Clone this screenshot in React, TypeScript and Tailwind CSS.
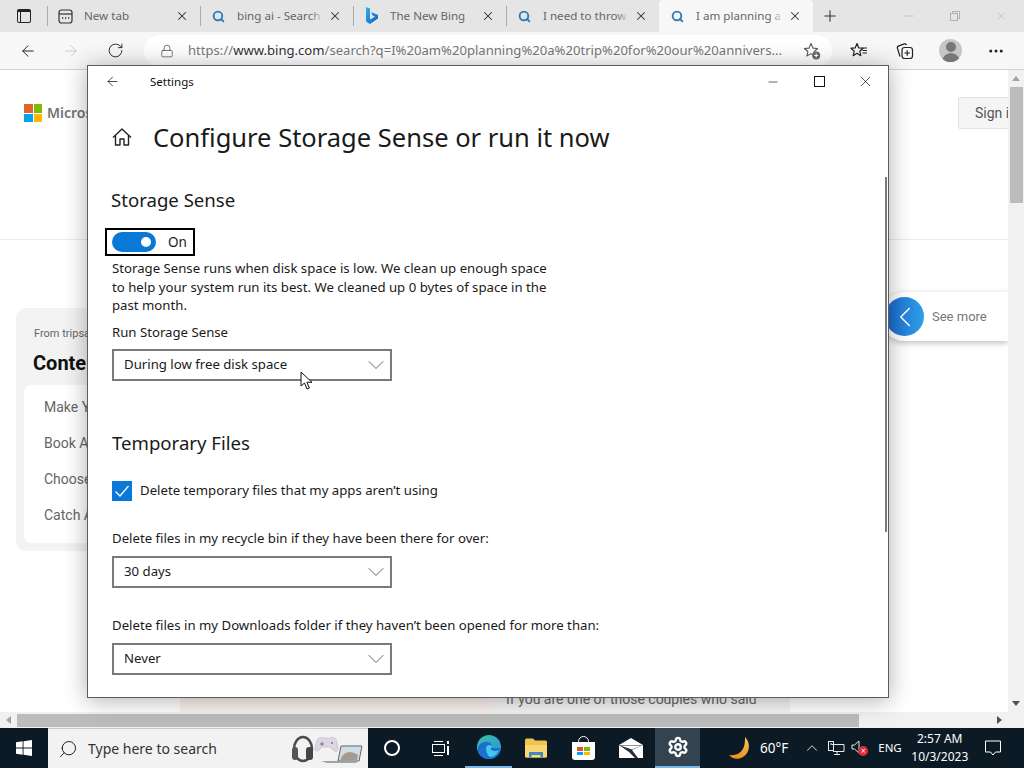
import { ArrowLeft, ArrowRight, ChevronDown, ChevronLeft, ChevronUp, Lock, Minus, MoreHorizontal, Plus, RotateCw, Search, Settings, X } from 'lucide-react'

const ui = { fontFamily: '"Noto Sans", sans-serif' }

function TabSearchIcon() {
  return <Search size={13} strokeWidth={3.4} className="text-[#2a7cb8] shrink-0" />
}

function BingLogo() {
  return (
    <svg width="14" height="18" viewBox="0 0 14 18" className="shrink-0">
      <defs>
        <linearGradient id="bing" x1="0" y1="0" x2="1" y2="1">
          <stop offset="0" stopColor="#2fb4ea" />
          <stop offset="1" stopColor="#1557c9" />
        </linearGradient>
      </defs>
      <path d="M1 0l4 1.500v11l5-2.800-2.400-1.200-1.400-3.400L13 8v3.600L5 17l-4-2.400z" fill="url(#bing)" />
    </svg>
  )
}

function NewTabIcon() {
  return (
    <svg width="15" height="15" viewBox="0 0 15 15" fill="none" stroke="#333" strokeWidth="1.2" className="shrink-0">
      <rect x="1" y="1" width="13" height="13" rx="2.500" />
      <path d="M1 5h13" />
      <path d="M4 9h1.200M7 9h1.200M10 9h1.200" strokeWidth="1.600" />
    </svg>
  )
}

function BrowserTab({ title, icon, active }: { title: string; icon: React.ReactNode; active?: boolean }) {
  return (
    <div className={`h-full flex items-center pr-[11px] relative ${active ? 'w-[154px] pl-[11px] bg-[#f7f7f7] rounded-t' : 'w-[152px] pl-[10px]'}`}>
      <div className="w-[15px] flex justify-center shrink-0">{icon}</div>
      <div className="ml-[11px] flex-1 relative text-[11.6px] text-[#666] whitespace-nowrap overflow-hidden">
        {title}
        <div className={`absolute right-0 top-0 bottom-0 w-[14px] bg-gradient-to-r from-transparent ${active ? 'to-[#f7f7f7]' : 'to-[#e5e5e5]'}`} />
      </div>
      <X size={14} strokeWidth={1.8} className="text-[#333] shrink-0 ml-1" />
    </div>
  )
}

function Separator() {
  return <div className="w-px h-[20px] bg-[#a9a9a9] shrink-0" />
}

function RestoreIcon() {
  return (
    <svg width="10" height="10" viewBox="0 0 10 10" fill="none" stroke="#b0b0b0" strokeWidth="1">
      <rect x="0.500" y="2.500" width="7" height="7" />
      <path d="M2.500 2.500v-2h7v7h-2" />
    </svg>
  )
}

function TabStrip() {
  return (
    <div className="h-[32px] bg-[#e5e5e5] flex items-center shrink-0">
      <div className="w-[47px] flex justify-center pl-[1px]">
        <div className="w-[14px] h-[14px] border-[1.5px] border-[#222] rounded-[2px] border-t-[3px] flex">
          <div className="w-[3px] border-r border-[#222]" />
        </div>
      </div>
      <Separator />
      <BrowserTab title="New tab" icon={<NewTabIcon />} />
      <Separator />
      <BrowserTab title="bing ai - Search" icon={<TabSearchIcon />} />
      <Separator />
      <BrowserTab title="The New Bing" icon={<BingLogo />} />
      <Separator />
      <BrowserTab title="I need to throw" icon={<TabSearchIcon />} />
      <BrowserTab title="I am planning a" icon={<TabSearchIcon />} active />
      <Plus size={18} strokeWidth={1.4} className="text-[#333] ml-[8px]" />
      <div className="flex-1" />
      <div className="flex items-center gap-[34px] pr-[16px] text-[#b0b0b0]">
        <Minus size={14} strokeWidth={1} />
        <RestoreIcon />
        <X size={14} strokeWidth={1} />
      </div>
    </div>
  )
}

function CollectionsIcon() {
  return (
    <svg width="18" height="18" viewBox="0 0 18 18" fill="none" stroke="#222" strokeWidth="1.2">
      <path d="M4 14.500L1.500 6.500c-.4-1.300.2-2.200 1.300-2.600l5.500-2c1-.3 1.800.1 2.200 1" />
      <rect x="6" y="5.500" width="10.500" height="11" rx="2.500" />
      <path d="M11.200 8.200v5.600M8.400 11h5.600" />
    </svg>
  )
}

function FavoritesIcon() {
  return (
    <svg width="18" height="18" viewBox="0 0 18 18" fill="none" stroke="#222" strokeWidth="1.2">
      <path d="M7 1.500l1.800 4.400 4.200.3-3.200 3 1 4.500L7 11.300 3.200 13.700l1-4.500L1 6.200l4.200-.3z" strokeLinejoin="round" />
      <path d="M12.500 6h4.500M12.500 8.500h4.500M12.500 11h4.500" />
    </svg>
  )
}

function AddFavoriteIcon() {
  return (
    <svg width="18" height="18" viewBox="0 0 18 18" fill="none" stroke="#555" strokeWidth="1.1">
      <path d="M8 1.500l2 4.600 4.600.4-3.500 3.100 1 4.500L8 11.600 3.900 14l1-4.500L1.400 6.500l4.600-.4z" strokeLinejoin="round" />
      <circle cx="13.200" cy="13.500" r="4" fill="#666" stroke="none" />
      <path d="M13.200 11.500v4M11.200 13.500h4" stroke="#fff" />
    </svg>
  )
}

function Toolbar() {
  return (
    <div className="h-[38px] bg-[#f7f7f7] border-b border-[#d2d2d2] flex items-center shrink-0">
      <ArrowLeft size={18} strokeWidth={1.3} className="text-[#222] ml-[19px]" />
      <ArrowRight size={18} strokeWidth={1.3} className="text-[#c9c9c9] ml-[25px]" />
      <RotateCw size={17} strokeWidth={1.3} className="text-[#222] ml-[27px]" />
      <div className="ml-[20px] w-[688px] h-[32px] bg-white rounded-full flex items-center pl-[16px] pr-[11px] text-[13.1px] whitespace-nowrap overflow-hidden">
        <Lock size={14} strokeWidth={1.2} className="text-[#444] shrink-0" />
        <div className="ml-[14px] flex-1 overflow-hidden">
          <span className="text-[#777]">https://</span>
          <span className="text-[#333]">www.bing.com</span>
          <span className="text-[#777]">/search?q=I%20am%20planning%20a%20trip%20for%20our%20annivers...</span>
        </div>
        <div className="w-[18px] shrink-0"><AddFavoriteIcon /></div>
      </div>
      <div className="ml-[18px] shrink-0"><FavoritesIcon /></div>
      <div className="ml-[28px] shrink-0"><CollectionsIcon /></div>
      <div className="ml-[25px] w-[23px] h-[23px] rounded-full bg-[#c6c6c6] flex flex-col items-center overflow-hidden shrink-0">
        <div className="w-[10px] h-[10px] mt-[3px] rounded-full bg-[#777]" />
        <div className="w-[18px] h-[10px] mt-[1px] rounded-t-full bg-[#777]" />
      </div>
      <MoreHorizontal size={18} className="text-[#222] ml-[25px]" />
    </div>
  )
}

function MsLogo() {
  return (
    <div className="grid grid-cols-2 gap-px w-[18px] h-[18px] shrink-0">
      <div className="bg-[#e0662c]" />
      <div className="bg-[#7fba00]" />
      <div className="bg-[#00a4ef]" />
      <div className="bg-[#ffb900]" />
    </div>
  )
}

function BackgroundPage() {
  const rows = ['Make Your', 'Book A', 'Choose', 'Catch A']
  return (
    <div className="flex-1 bg-white relative overflow-hidden" style={{ fontFamily: 'Roboto, sans-serif' }}>
      <div className="absolute left-[24px] top-[34px] flex items-center gap-[5px]">
        <MsLogo />
        <span className="text-[14px] leading-[16px] font-semibold text-[#737373]" style={ui}>Microsoft</span>
      </div>
      <div className="absolute left-[958px] top-[27px] w-[60px] h-[32px] bg-[#f5f5f5] border border-[#e3e3e3] rounded-[2px] pl-[16px] flex items-center text-[14px] text-[#555]">Sign in</div>
      <div className="absolute left-0 right-[16px] top-[169px] h-px bg-[#ececec]" />
      <div className="absolute left-[16px] top-[238px] w-[120px] h-[243px] bg-[#f3f3f3] rounded-[10px] pl-[8px] pt-[18px]">
        <div className="pl-[10px] text-[11px] text-[#666] whitespace-nowrap">From tripsavvy</div>
        <div className="pl-[9px] mt-[8px] text-[20px] font-bold text-[#111] leading-[24px]">Contents</div>
        <div className="mt-[10px] w-[110px] h-[158px] bg-white rounded-[8px] pl-[20px] pt-[13px] flex flex-col gap-[17px]">
          {rows.map((r) => (
            <div key={r} className="text-[14px] leading-[19px] text-[#666] whitespace-nowrap">{r}</div>
          ))}
        </div>
      </div>
      <div className="absolute left-[880px] top-[222px] w-[128px] h-[49px] bg-white shadow-[0_2px_6px_rgba(0,0,0,0.25)] rounded-l-full flex items-center">
        <div className="ml-[5px] w-[39px] h-[39px] rounded-full bg-gradient-to-r from-[#1c68cc] to-[#2f9fe8] flex items-center justify-center">
          <ChevronLeft size={34} strokeWidth={1.1} className="text-white" />
        </div>
        <span className="ml-[8px] text-[13px] text-[#777]">See more</span>
      </div>
      <div className="absolute left-[180px] top-[622px] w-[310px] h-[20px] bg-[#fbf1ee]" />
      <div className="absolute left-[490px] top-[622px] w-[300px] h-[20px] bg-[#f5f5f5] pl-[16px] text-[14px] leading-[14px] text-[#666]">If you are one of those couples who said</div>
      <div className="absolute right-0 top-0 bottom-0 w-[16px] bg-[#f1f1f1] flex flex-col items-center">
        <div className="h-[17px] flex items-center justify-center">
          <div className="w-0 h-0 border-x-[4px] border-x-transparent border-b-[5px] border-b-[#a3a3a3]" />
        </div>
        <div className="w-[13px] h-[116px] bg-[#bcbcbc]" />
        <div className="flex-1" />
        <div className="h-[17px] flex items-center justify-center">
          <div className="w-0 h-0 border-x-[4px] border-x-transparent border-t-[5px] border-t-[#505050]" />
        </div>
      </div>
    </div>
  )
}

function HorizontalScrollbar() {
  return (
    <div className="h-[16px] bg-[#f1f1f1] flex items-center shrink-0">
      <div className="w-[17px] flex justify-center">
        <div className="w-0 h-0 border-y-[4px] border-y-transparent border-r-[5px] border-r-[#a3a3a3]" />
      </div>
      <div className="w-[842px] h-[13px] bg-[#bcbcbc]" />
      <div className="flex-1" />
      <div className="w-[17px] mr-[16px] flex justify-center">
        <div className="w-0 h-0 border-y-[4px] border-y-transparent border-l-[5px] border-l-[#505050]" />
      </div>
    </div>
  )
}

function Dropdown({ value }: { value: string }) {
  return (
    <div className="w-[280px] h-[32px] border-2 border-[#7a7a7a] flex items-center pl-[10px] text-[13.2px] text-[#1a1a1a]">
      <span className="flex-1">{value}</span>
      <ChevronDown size={28} strokeWidth={0.7} className="text-[#444] shrink-0" />
    </div>
  )
}

function CursorIcon() {
  return (
    <svg width="14" height="20" viewBox="0 0 14 20" className="absolute left-[188px] top-[-2px]">
      <path d="M1 1v14l3.500-3 2.500 6 2.400-1-2.500-5.700H12z" fill="#fff" stroke="#111" strokeWidth="1" strokeLinejoin="round" />
    </svg>
  )
}

function HomeIcon() {
  return (
    <svg width="20" height="20" viewBox="0 0 20 20" fill="none" stroke="#222" strokeWidth="1.400" strokeLinejoin="round">
      <path d="M1 10.500L10 2l9 8.500" />
      <path d="M3.500 8.500V18h4.500v-6h4v6h4.500V8.500" />
    </svg>
  )
}

function SettingsWindow() {
  return (
    <div className="absolute left-[87px] top-[65px] w-[802px] h-[633px] bg-white border border-[#5c5c5c] shadow-[0_2px_22px_rgba(0,0,0,0.32)] overflow-hidden z-10" style={ui}>
      <div className="h-[31px] flex items-center">
        <ArrowLeft size={15} strokeWidth={1.2} className="text-[#111] ml-[17px]" />
        <span className="ml-[30px] text-[11.5px] text-[#111]">Settings</span>
        <div className="flex-1" />
        <Minus size={14} strokeWidth={1.1} className="text-[#111] mr-[34px]" />
        <div className="w-[11px] h-[11px] border border-[#111] mr-[32px]" />
        <X size={17} strokeWidth={1} className="text-[#111] mr-[14px]" />
      </div>

      <div className="pl-[24px] relative">
        <div className="mt-[21px] flex items-center">
          <HomeIcon />
          <h1 className="ml-[21px] text-[25.5px] leading-[38px] text-[#1a1a1a] whitespace-nowrap">Configure Storage Sense or run it now</h1>
        </div>

        <h2 className="mt-[31px] ml-[-1px] text-[18.6px] leading-[26px] text-[#1a1a1a]">Storage Sense</h2>
        <div className="mt-[15px] ml-[-7px] w-[90px] h-[28px] border-2 border-black flex items-center pl-[5px]">
          <div className="w-[44px] h-[20px] rounded-full bg-[#0a78d7] flex items-center justify-end pr-[5px]">
            <div className="w-[10px] h-[10px] rounded-full bg-white" />
          </div>
          <span className="ml-[12px] text-[13.5px] text-[#1a1a1a]">On</span>
        </div>
        <p className="mt-[3px] w-[440px] text-[13.2px] leading-[18.5px] text-[#1a1a1a]">
          Storage Sense runs when disk space is low. We clean up enough space to help your system run its best. We cleaned up 0 bytes of space in the past month.
        </p>
        <div className="mt-[8px] text-[13.2px] leading-[18px] text-[#1a1a1a]">Run Storage Sense</div>
        <div className="mt-[8px] relative">
          <Dropdown value="During low free disk space" />
          <div className="absolute left-[0px] top-[24px] w-0 h-0">
            <CursorIcon />
          </div>
        </div>

        <h2 className="mt-[49px] text-[18.6px] leading-[26px] text-[#1a1a1a]">Temporary Files</h2>
        <div className="mt-[25px] flex items-center">
          <div className="w-[20px] h-[20px] bg-[#0a78d7] flex items-center justify-center">
            <svg width="16" height="14" viewBox="0 0 16 14" fill="none" stroke="#fff" strokeWidth="1.300">
              <path d="M1.500 7.500l4.500 4.500L14.500 2" />
            </svg>
          </div>
          <span className="ml-[8px] text-[13.2px] text-[#1a1a1a]">Delete temporary files that my apps aren’t using</span>
        </div>
        <div className="mt-[28px] text-[13.2px] leading-[18px] text-[#1a1a1a]">Delete files in my recycle bin if they have been there for over:</div>
        <div className="mt-[9px]"><Dropdown value="30 days" /></div>
        <div className="mt-[28px] text-[13.2px] leading-[18px] text-[#1a1a1a]">Delete files in my Downloads folder if they haven’t been opened for more than:</div>
        <div className="mt-[9px]"><Dropdown value="Never" /></div>
      </div>

      <div className="absolute right-[1px] top-[111px] w-[2px] h-[355px] bg-[#7b7b7b]" />
    </div>
  )
}

function WindowsLogo() {
  return (
    <svg width="16" height="16" viewBox="0 0 16 16" fill="#fff">
      <path d="M0 2.300l6.600-1v6.300H0zM7.500 1.200L16 0v7.600H7.500zM0 8.400h6.600v6.300l-6.600-1zM7.500 8.400H16V16l-8.500-1.200z" />
    </svg>
  )
}

function SearchArt() {
  return (
    <svg width="74" height="32" viewBox="0 0 74 32" className="shrink-0">
      <ellipse cx="12" cy="16" rx="9" ry="12" fill="none" stroke="#4b4b4b" strokeWidth="2.500" />
      <rect x="1" y="14" width="6" height="13" rx="3" fill="#555" />
      <rect x="15" y="14" width="7" height="13" rx="3" fill="#444" />
      <path d="M26 7c2-3 5-3 7-2h6c3-2 6 0 7 4l1 7c0 3-3 3-5 1l-3-3h-8l-3 3c-2 2-5 1-4-2z" fill="#dcd6e4" stroke="#b5adc0" strokeWidth=".5" />
      <path d="M31 9v4M29 11h4" stroke="#7a7488" strokeWidth="1" />
      <circle cx="41" cy="10" r="1" fill="#7a7488" />
      <path d="M50 13h21l-3 15H47z" fill="#cfdde6" stroke="#666" strokeWidth="1" />
      <path d="M52 22c4-4 9-4 15 0l-1 5H49z" fill="#a99a8e" />
      <path d="M30 28h37l-2 2H36z" fill="#9ca3aa" />
    </svg>
  )
}

function EdgeLogo() {
  return (
    <svg width="24" height="24" viewBox="0 0 24 24">
      <defs>
        <linearGradient id="edgeA" x1="0" y1="0" x2="1" y2="1">
          <stop offset="0" stopColor="#36c3a0" />
          <stop offset="1" stopColor="#2a8fe0" />
        </linearGradient>
      </defs>
      <circle cx="12" cy="12" r="12" fill="url(#edgeA)" />
      <path d="M1 13c1-5 6-7 10-6 4 1 5 4 3 6h9c0 6-6 11-11 11C5 24 0 19 1 13z" fill="#1a6fd0" />
      <path d="M9 13c0-2 2-3 4-3s2.500 2 1 3c-1 1 1 3 4 3 1.500 0 3-.5 4-1.500-1 4-5 7.500-8 7.500-3 0-5-5-5-9z" fill="#42c8e8" />
    </svg>
  )
}

function ExplorerIcon() {
  return (
    <svg width="22" height="20" viewBox="0 0 22 20">
      <path d="M0 2a1.500 1.500 0 0 1 1.500-1.500H8l2 2h10.500A1.500 1.500 0 0 1 22 4v14a1.500 1.500 0 0 1-1.500 1.500h-19A1.500 1.500 0 0 1 0 18z" fill="#f3c24e" />
      <path d="M0 7h22v11a1.500 1.500 0 0 1-1.500 1.500h-19A1.500 1.500 0 0 1 0 18z" fill="#f8d775" />
      <path d="M4 14h14v5.500h-2.500V17h-9v2.500H4z" fill="#3f88c5" />
    </svg>
  )
}

function StoreIcon() {
  return (
    <div className="relative w-[23px] h-[24px]">
      <div className="absolute left-[6px] top-0 w-[11px] h-[10px] border-[1.5px] border-white rounded-t-full" />
      <div className="absolute left-0 bottom-0 w-[23px] h-[18px] bg-white rounded-b-[3px] grid grid-cols-2 gap-px p-[5px]">
        <div className="bg-[#e8522b]" />
        <div className="bg-[#7fba00]" />
        <div className="bg-[#00a4ef]" />
        <div className="bg-[#ffb900]" />
      </div>
    </div>
  )
}

function MailIcon() {
  return (
    <svg width="24" height="20" viewBox="0 0 24 20">
      <path d="M0 7l12-7 12 7v13H0z" fill="#fff" />
      <path d="M0 7h24l-11 5 6 8h-3l-6-6z" fill="#0d1b29" opacity=".9" />
      <path d="M1 7.500h22L13 11.500z" fill="#fff" />
    </svg>
  )
}

function MoonIcon() {
  return (
    <svg width="24" height="24" viewBox="0 0 24 24">
      <defs>
        <linearGradient id="moon" x1="0" y1="0" x2="0" y2="1">
          <stop offset="0" stopColor="#fbc75f" />
          <stop offset="1" stopColor="#ef8f1f" />
        </linearGradient>
      </defs>
      <path d="M17 1c6 6 5 16-2 20-5 3-11 2-14-2 6 1 11-1 14-6 2-4 2-8 2-12z" fill="url(#moon)" />
    </svg>
  )
}

function NetworkIcon() {
  return (
    <svg width="17" height="14" viewBox="0 0 17 14" fill="none" stroke="#e8e8e8" strokeWidth="1">
      <path d="M3.500 3.500H16v7H8M5 10.500h3M9 10.500v3M6 13.500h6" />
      <rect x="0.500" y="0.500" width="5" height="9" />
      <path d="M2 3h2" />
    </svg>
  )
}

function MutedSpeaker() {
  return (
    <div className="relative w-[18px] h-[16px]">
      <svg width="10" height="14" viewBox="0 0 10 14" fill="none" stroke="#e8e8e8" strokeWidth="1">
        <path d="M1 5h2.500L8 1v12L3.500 9H1z" />
      </svg>
      <div className="absolute left-[7px] top-[6px] w-[10px] h-[10px] rounded-full bg-[#d8313d] text-white text-[8px] leading-[9px] text-center">×</div>
    </div>
  )
}

function Taskbar() {
  return (
    <div className="h-[40px] bg-[#0c1a26] flex items-center shrink-0 text-white" style={ui}>
      <div className="w-[48px] flex justify-center"><WindowsLogo /></div>
      <div className="w-[320px] h-full bg-[#f2f2f2] border-t border-[#c9c9c9] flex items-center text-[#333]">
        <Search size={20} strokeWidth={1.2} className="ml-[10px] -scale-x-100 text-[#222]" />
        <span className="ml-[10px] text-[14px] flex-1">Type here to search</span>
        <div className="mr-[3px]"><SearchArt /></div>
      </div>
      <div className="w-[47px] flex justify-center">
        <div className="w-[16px] h-[16px] rounded-full border-2 border-white" />
      </div>
      <div className="w-[50px] flex justify-center">
        <div className="relative w-[17px] h-[15px] flex items-center">
          <div className="w-[13px] h-[9px] border border-white" />
          <div className="absolute left-[2px] top-0 w-[9px] h-px bg-white" />
          <div className="absolute left-[2px] bottom-0 w-[9px] h-px bg-white" />
          <div className="absolute right-0 top-0 w-[2px] h-[3px] bg-white" />
          <div className="absolute right-0 top-[5px] w-[2px] h-[9px] bg-white" />
        </div>
      </div>
      <div className="w-[47px] h-full flex justify-center items-center border-b-[2px] border-[#76b9ed]"><EdgeLogo /></div>
      <div className="w-[48px] flex justify-center"><ExplorerIcon /></div>
      <div className="w-[46px] flex justify-center"><StoreIcon /></div>
      <div className="w-[49px] flex justify-center"><MailIcon /></div>
      <div className="w-[45px] h-full bg-[#33434f] flex justify-center items-center border-b-[2px] border-[#76b9ed]">
        <Settings size={22} strokeWidth={2.6} className="text-white" />
      </div>
      <div className="ml-[28px] w-[24px]"><MoonIcon /></div>
      <span className="ml-[8px] text-[13.5px] whitespace-nowrap">60°F</span>
      <ChevronUp size={18} strokeWidth={1.2} className="ml-[15px] text-[#e8e8e8]" />
      <div className="ml-[7px]"><NetworkIcon /></div>
      <div className="ml-[6px]"><MutedSpeaker /></div>
      <span className="ml-[9px] text-[11.5px]">ENG</span>
      <div className="ml-[10px] w-[56px] flex flex-col items-center text-[12px] leading-[18px] whitespace-nowrap">
        <span>2:57 AM</span>
        <span>10/3/2023</span>
      </div>
      <svg width="16" height="16" viewBox="0 0 16 16" fill="none" stroke="#fff" strokeWidth="1" className="ml-[17px]">
        <path d="M.5 1h15v11h-5L8 15l-2.500-3H.5z" />
      </svg>
    </div>
  )
}

export default function App() {
  return (
    <div className="w-[1024px] h-[768px] flex flex-col relative overflow-hidden" style={ui}>
      <TabStrip />
      <Toolbar />
      <BackgroundPage />
      <HorizontalScrollbar />
      <Taskbar />
      <SettingsWindow />
    </div>
  )
}
